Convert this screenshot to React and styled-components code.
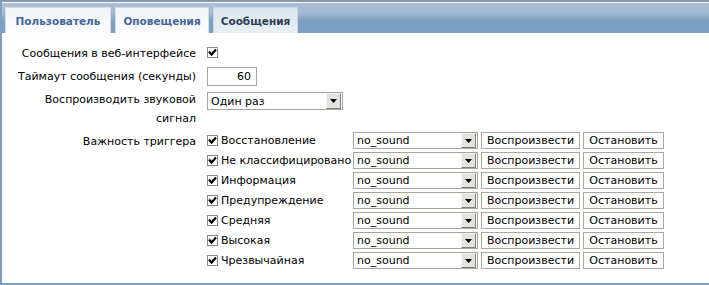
import React from "react";
import styled, { createGlobalStyle } from "styled-components";

const GlobalStyle = createGlobalStyle`
  html, body {
    margin: 0;
    padding: 0;
    background: #ffffff;
  }
  body {
    font-family: "DejaVu Sans", Verdana, sans-serif;
    font-size: 11px;
    color: #000;
  }
`;

const Frame = styled.div`
  width: 709px;
  height: 285px;
  box-sizing: border-box;
  border-top: 2px solid #8797ac;
  border-left: 2px solid #7c9ec3;
  border-bottom: 2px solid #7c9ec3;
  display: flex;
  flex-direction: column;
  overflow: hidden;
`;

const TabBar = styled.div`
  margin-top: 1px;
  height: 30px;
  box-sizing: border-box;
  padding: 4px 0 0 3px;
  display: flex;
  gap: 4px;
  align-items: flex-end;
  background: linear-gradient(#aabed6 0%, #a6bad3 30%, #7c9fc4 60%, #7a9ec4 100%);
`;

const TabButton = styled.div`
  width: ${(p) => p.$w}px;
  height: 26px;
  box-sizing: border-box;
  display: flex;
  align-items: center;
  justify-content: center;
  font-weight: bold;
  font-size: 10.5px;
  white-space: nowrap;
  border: 1px solid ${(p) => (p.$active ? "#c9d5e2" : "#d4dee9")};
  border-bottom: none;
  color: ${(p) => (p.$active ? "#2e3d52" : "#45679a")};
  background: ${(p) =>
    p.$active
      ? "linear-gradient(#dde6ef, #e8eef4)"
      : "linear-gradient(#f1f4f8, #fbfcfd)"};
`;

const Form = styled.div`
  padding: 11px 0 0 12px;
  display: flex;
  flex-direction: column;
  gap: 3px;
`;

const Row = styled.div`
  display: flex;
  align-items: ${(p) => (p.$top ? "flex-start" : "center")};
  min-height: ${(p) => p.$h || 19}px;
`;

const Label = styled.div`
  width: 182px;
  text-align: right;
  line-height: ${(p) => p.$lh || 19}px;
  padding-top: ${(p) => p.$pt || 0}px;
  flex-shrink: 0;
`;

const Field = styled.div`
  margin-left: 11px;
  padding-top: ${(p) => p.$pt || 0}px;
`;

const CheckBox = styled.span`
  display: inline-flex;
  width: 11px;
  height: 11px;
  flex-shrink: 0;
`;

const TextInput = styled.div`
  width: 50px;
  height: 19px;
  box-sizing: border-box;
  border: 1px solid #a7a69b;
  text-align: right;
  padding-right: 5px;
  line-height: 17px;
`;

const Select = styled.div`
  width: ${(p) => p.$w}px;
  height: ${(p) => p.$h}px;
  box-sizing: border-box;
  border: 1px solid #a7a69b;
  display: flex;
  align-items: center;
  justify-content: space-between;
  padding-left: 3px;
  background: #fff;
`;

const Arrow = styled.span`
  width: 15px;
  height: ${(p) => p.$h}px;
  box-sizing: border-box;
  margin-right: 1px;
  border: 1px solid;
  border-color: #f4f4f4 #7f7f7f #7f7f7f #f4f4f4;
  background: #e4e2dc;
  display: flex;
  align-items: center;
  justify-content: center;
`;

const TriggerList = styled.div`
  margin-left: 11px;
  display: flex;
  flex-direction: column;
  gap: 3px;
  padding-top: 1px;
`;

const TriggerRow = styled.div`
  display: grid;
  grid-template-columns: 143px 125px 99px 81px;
  column-gap: 3px;
  align-items: center;
  height: 17px;
`;

const TriggerName = styled.div`
  display: flex;
  align-items: center;
  gap: 3px;
  white-space: nowrap;
`;

const Button = styled.div`
  height: 17px;
  box-sizing: border-box;
  border: 1px solid #aaa89d;
  background: #fff;
  display: flex;
  align-items: center;
  justify-content: center;
`;

function Check() {
  return (
    <CheckBox>
      <svg width="11" height="11" viewBox="0 0 11 11">
        <rect x="0.5" y="0.5" width="10" height="10" fill="#fff" stroke="#8a8a8a" />
        <path d="M2 4.5 L4.5 7.5 L9 2.5" fill="none" stroke="#000" strokeWidth="2.2" />
      </svg>
    </CheckBox>
  );
}

function Dropdown({ value, w, h }) {
  return (
    <Select $w={w} $h={h}>
      <span>{value}</span>
      <Arrow $h={h - 2}>
        <svg width="7" height="4" viewBox="0 0 7 4">
          <path d="M0 0 H7 L3.5 4 Z" fill="#000" />
        </svg>
      </Arrow>
    </Select>
  );
}

const triggers = [
  "Восстановление",
  "Не классифицировано",
  "Информация",
  "Предупреждение",
  "Средняя",
  "Высокая",
  "Чрезвычайная",
];

export default function App() {
  return (
    <>
      <GlobalStyle />
      <Frame>
        <TabBar>
          <TabButton $w={106}>Пользователь</TabButton>
          <TabButton $w={94}>Оповещения</TabButton>
          <TabButton $w={85} $active>Сообщения</TabButton>
        </TabBar>
        <Form>
          <Row>
            <Label>Сообщения в веб-интерфейсе</Label>
            <Field>
              <Check />
            </Field>
          </Row>
          <Row $h={21}>
            <Label $lh={21}>Таймаут сообщения (секунды)</Label>
            <Field>
              <TextInput>60</TextInput>
            </Field>
          </Row>
          <Row $top>
            <Label>Воспроизводить звуковой сигнал</Label>
            <Field $pt={2}>
              <Dropdown value="Один раз" w={136} h={18} />
            </Field>
          </Row>
          <Row $top>
            <Label $pt={1}>Важность триггера</Label>
            <TriggerList>
              {triggers.map((t) => (
                <TriggerRow key={t}>
                  <TriggerName>
                    <Check />
                    {t}
                  </TriggerName>
                  <Dropdown value="no_sound" w={125} h={17} />
                  <Button>Воспроизвести</Button>
                  <Button>Остановить</Button>
                </TriggerRow>
              ))}
            </TriggerList>
          </Row>
        </Form>
      </Frame>
    </>
  );
}
